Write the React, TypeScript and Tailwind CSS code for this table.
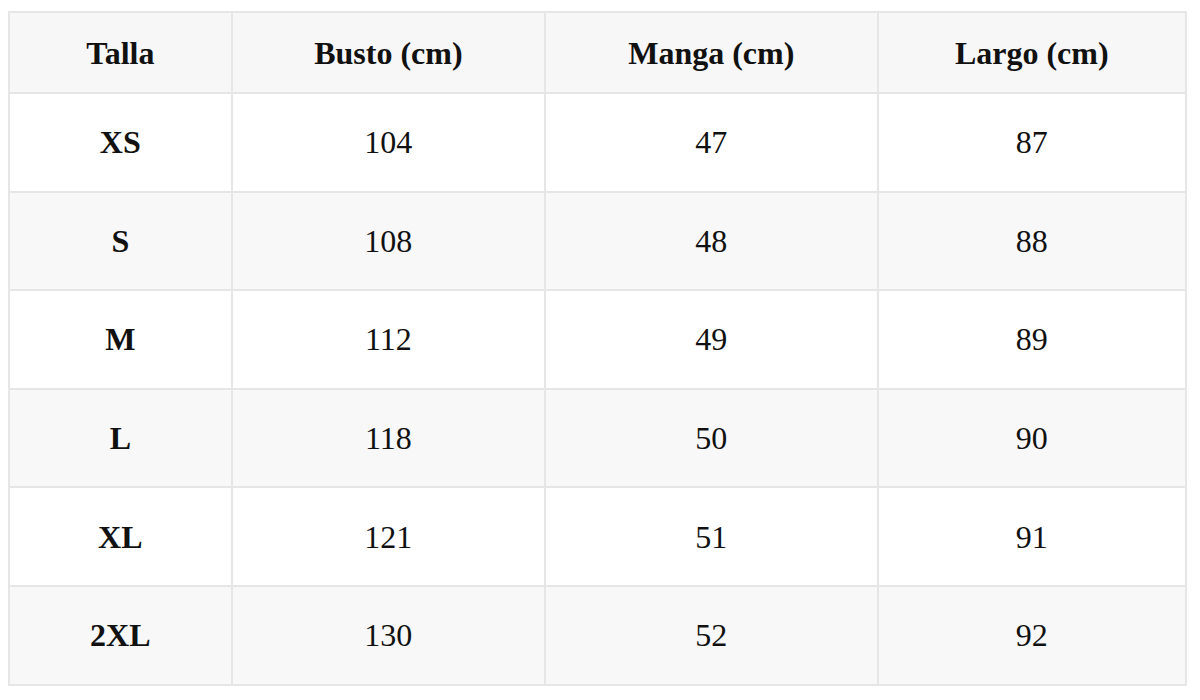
import React from "react";

const rows = [
  ["XS", "104", "47", "87"],
  ["S", "108", "48", "88"],
  ["M", "112", "49", "89"],
  ["L", "118", "50", "90"],
  ["XL", "121", "51", "91"],
  ["2XL", "130", "52", "92"],
];

export default function App() {
  return (
    <div className="w-[1200px] h-[700px] bg-white pt-[11px] pl-[8px]" style={{ fontFamily: '"Liberation Serif", "Times New Roman", serif' }}>
      <table className="border-collapse w-[1179px] text-[#111] text-[32px] leading-none">
        <colgroup>
          <col className="w-[223px]" />
          <col className="w-[314px]" />
          <col className="w-[333px]" />
          <col className="w-[309px]" />
        </colgroup>
        <thead>
          <tr className="bg-[#f7f7f7] h-[81px]">
            {["Talla", "Busto (cm)", "Manga (cm)", "Largo (cm)"].map((h) => (
              <th key={h} className="border-2 border-[#e6e6e6] font-bold text-center p-0">{h}</th>
            ))}
          </tr>
        </thead>
        <tbody>
          {rows.map((r, i) => (
            <tr key={r[0]} className={`h-[98.6px] ${i % 2 === 1 ? "bg-[#f8f8f8]" : "bg-white"}`}>
              {r.map((c, j) => (
                <td key={j} className={`border-2 border-[#e6e6e6] text-center p-0 ${j === 0 ? "font-bold" : ""}`}>{c}</td>
              ))}
            </tr>
          ))}
        </tbody>
      </table>
    </div>
  );
}
